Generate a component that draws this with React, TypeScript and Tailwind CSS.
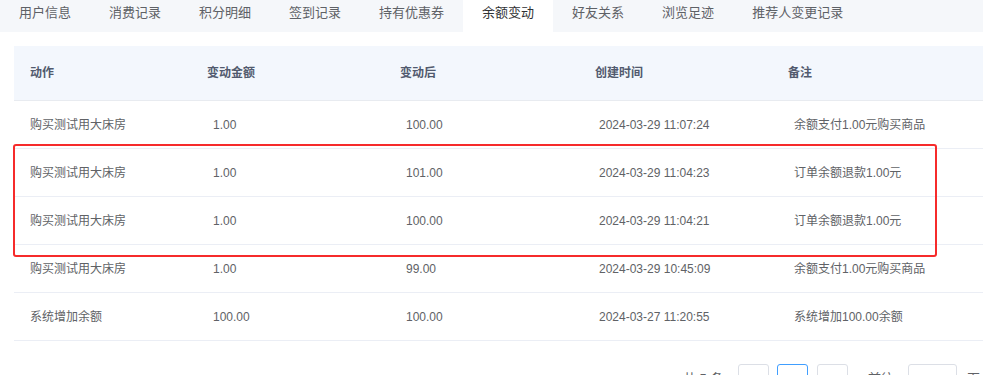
const tabs = ["用户信息", "消费记录", "积分明细", "签到记录", "持有优惠券", "余额变动", "好友关系", "浏览足迹", "推荐人变更记录"];

const rows = [
  { action: "购买测试用大床房", amount: "1.00", after: "100.00", time: "2024-03-29 11:07:24", remark: "余额支付1.00元购买商品" },
  { action: "购买测试用大床房", amount: "1.00", after: "101.00", time: "2024-03-29 11:04:23", remark: "订单余额退款1.00元" },
  { action: "购买测试用大床房", amount: "1.00", after: "100.00", time: "2024-03-29 11:04:21", remark: "订单余额退款1.00元" },
  { action: "购买测试用大床房", amount: "1.00", after: "99.00", time: "2024-03-29 10:45:09", remark: "余额支付1.00元购买商品" },
  { action: "系统增加余额", amount: "100.00", after: "100.00", time: "2024-03-27 11:20:55", remark: "系统增加100.00余额" },
];

const cols = "grid grid-cols-[177px_193px_195px_193px_211px]";

export default function App() {
  return (
    <div
      className="relative w-[986px] h-[375px] overflow-hidden bg-white"
      style={{ fontFamily: '"Liberation Sans", "Noto Sans CJK SC", sans-serif' }}
    >
      {/* tabs */}
      <div className="flex w-[983px] h-8 bg-[#f5f7fa]">
        {tabs.map((t) => (
          <div
            key={t}
            className={
              "h-8 pt-[5px] px-[19px] text-[13px] leading-4 " +
              (t === "余额变动" ? "bg-white text-[#303133]" : "text-[#5e6166]")
            }
          >
            {t}
          </div>
        ))}
      </div>

      {/* table */}
      <div className="ml-[14px] mt-[14px] w-[969px] text-[12px]">
        <div className={cols + " h-[55px] items-center bg-[#f3f7fd] border-b border-[#e8ebf0] font-semibold text-[#515a6e]"}>
          <div className="pl-4">动作</div>
          <div className="pl-4">变动金额</div>
          <div className="pl-4">变动后</div>
          <div className="pl-4">创建时间</div>
          <div className="pl-4">备注</div>
        </div>
        {rows.map((r, i) => (
          <div key={i} className={cols + " h-12 items-center border-b border-[#ebeef5] text-[#606266]"}>
            <div className="pl-4">{r.action}</div>
            <div className="pl-[22px]">{r.amount}</div>
            <div className="pl-[22px]">{r.after}</div>
            <div className="pl-[20px]">{r.time}</div>
            <div className="pl-[22px]">{r.remark}</div>
          </div>
        ))}
      </div>

      {/* pagination */}
      <div className="flex items-start ml-[683px] mt-[23px] h-8 text-[13px] text-[#606266]">
        <span className="w-[55px] pt-[7px] leading-4">共 5 条</span>
        <div className="w-[31px] h-8 rounded-[3px] border border-[#dcdfe6] flex items-center justify-center text-[#c0c4cc]">‹</div>
        <div className="ml-[8px] w-[31px] h-8 rounded-[3px] border border-[#409eff] flex items-center justify-center text-[#409eff]">1</div>
        <div className="ml-[9px] w-[31px] h-8 rounded-[3px] border border-[#dcdfe6] flex items-center justify-center text-[#c0c4cc]">›</div>
        <span className="ml-[20px] w-[40px] pt-[7px] leading-4">前往</span>
        <div className="w-[49px] h-8 rounded-[3px] border border-[#dcdfe6] flex items-center justify-center">1</div>
        <span className="ml-[10px] pt-[7px] leading-4">页</span>
      </div>

      {/* annotation */}
      <div className="absolute left-[13px] top-[144px] w-[924px] h-[113px] border-2 border-[#f62b2b] rounded-[3px]" />
    </div>
  );
}
